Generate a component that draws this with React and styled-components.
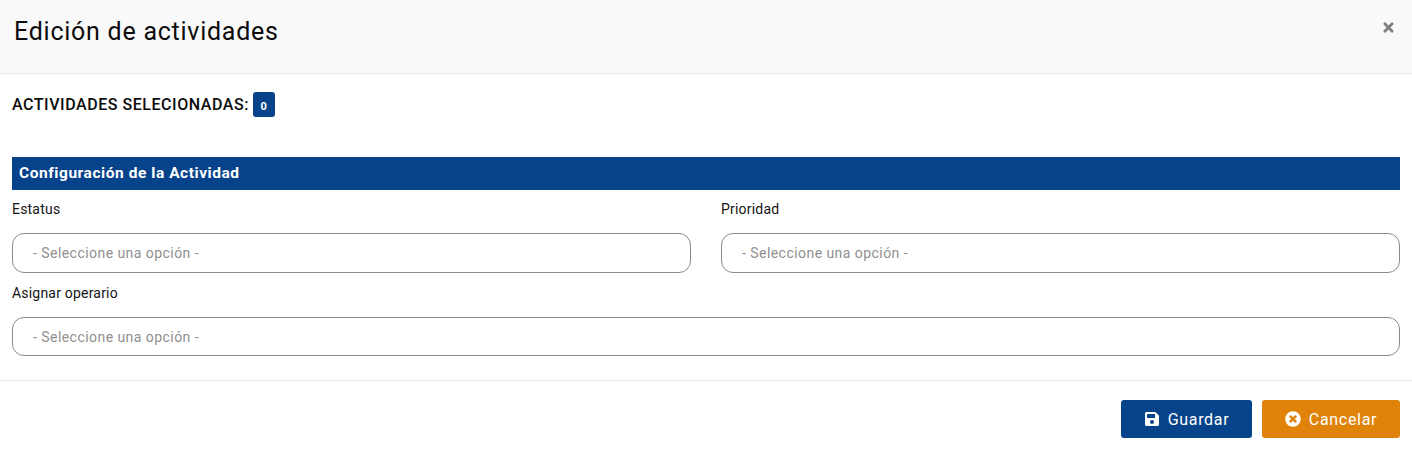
import React from "react";
import styled, { createGlobalStyle } from "styled-components";
import { FaSave, FaTimes, FaTimesCircle } from "react-icons/fa";

const GlobalStyle = createGlobalStyle`
  html, body {
    margin: 0;
    padding: 0;
    background: #fff;
    font-family: Roboto, "Liberation Sans", sans-serif;
    color: #111;
  }
  * {
    box-sizing: border-box;
  }
`;

const Modal = styled.div`
  width: 1412px;
  height: 453px;
  background: #fff;
`;

const Header = styled.header`
  height: 74px;
  background: #f9f9f9;
  border-bottom: 1px solid #e9e9e9;
  display: flex;
  justify-content: space-between;
  padding: 0 16px 0 14px;
`;

const Title = styled.h1`
  margin: 0;
  padding-top: 15px;
  font-size: 25px;
  line-height: 34px;
  font-weight: 400;
  letter-spacing: 0.75px;
  color: #0c0c0c;
`;

const Close = styled.button`
  border: 0;
  padding: 0;
  margin-top: 19px;
  width: 16px;
  height: 16px;
  background: none;
  color: #808080;
  font-size: 15px;
  display: flex;
  align-items: center;
  justify-content: center;
`;

const Body = styled.div`
  height: 307px;
  padding: 18px 12px 0;
  border-bottom: 1px solid #e9e9e9;
`;

const Selected = styled.div`
  display: flex;
  align-items: center;
  gap: 4px;
  height: 25px;
  font-size: 16px;
  font-weight: 500;
  letter-spacing: 0.55px;
  color: #0c0c0c;
`;

const Badge = styled.span`
  width: 22px;
  height: 25px;
  border-radius: 3px;
  background: #07438a;
  color: #fff;
  font-size: 11px;
  font-weight: 700;
  display: flex;
  align-items: center;
  justify-content: center;
  padding-top: 3px;
`;

const SectionBar = styled.h2`
  margin: 40px 0 0;
  height: 33px;
  padding: 0 7px;
  background: #07438a;
  color: #fff;
  font-size: 15.5px;
  line-height: 33px;
  font-weight: 700;
  letter-spacing: 0.55px;
`;

const Grid = styled.div`
  display: grid;
  grid-template-columns: 1fr 1fr;
  column-gap: 30px;
`;

const Field = styled.div`
  grid-column: ${(p) => (p.$wide ? "1 / -1" : "auto")};
  height: ${(p) => (p.$wide ? "83px" : "84px")};
`;

const Label = styled.label`
  display: block;
  height: 43px;
  padding-top: 11px;
  font-size: 14px;
  line-height: 16px;
  letter-spacing: 0.2px;
  color: #151515;
`;

const Select = styled.div`
  height: ${(p) => (p.$wide ? "39px" : "40px")};
  border: 1px solid #8a8a8a;
  border-radius: 12px;
  padding-left: 20px;
  display: flex;
  align-items: center;
  font-size: 14px;
  letter-spacing: 0.45px;
  color: #8f8f8f;
`;

const Footer = styled.footer`
  display: flex;
  justify-content: flex-end;
  gap: 10px;
  padding: 19px 12px 0;
`;

const Button = styled.button`
  width: ${(p) => p.$width}px;
  height: 38px;
  border: 0;
  border-radius: 3px;
  background: ${(p) => p.$bg};
  color: #fff;
  font-family: inherit;
  font-size: 16px;
  font-weight: 400;
  letter-spacing: 0.7px;
  display: flex;
  align-items: center;
  justify-content: center;
  gap: 8px;
  svg {
    font-size: 16px;
    flex: none;
  }
`;

const fields = ["Estatus", "Prioridad"];

export default function App() {
  return (
    <Modal>
      <GlobalStyle />
      <Header>
        <Title>Edición de actividades</Title>
        <Close aria-label="Cerrar">
          <FaTimes />
        </Close>
      </Header>
      <Body>
        <Selected>
          ACTIVIDADES SELECIONADAS:
          <Badge>0</Badge>
        </Selected>
        <SectionBar>Configuración de la Actividad</SectionBar>
        <Grid>
          {fields.map((name) => (
            <Field key={name}>
              <Label>{name}</Label>
              <Select>- Seleccione una opción -</Select>
            </Field>
          ))}
          <Field $wide>
            <Label>Asignar operario</Label>
            <Select $wide>- Seleccione una opción -</Select>
          </Field>
        </Grid>
      </Body>
      <Footer>
        <Button $bg="#07438a" $width={131}>
          <FaSave />
          Guardar
        </Button>
        <Button $bg="#e0830a" $width={138}>
          <FaTimesCircle />
          Cancelar
        </Button>
      </Footer>
    </Modal>
  );
}
